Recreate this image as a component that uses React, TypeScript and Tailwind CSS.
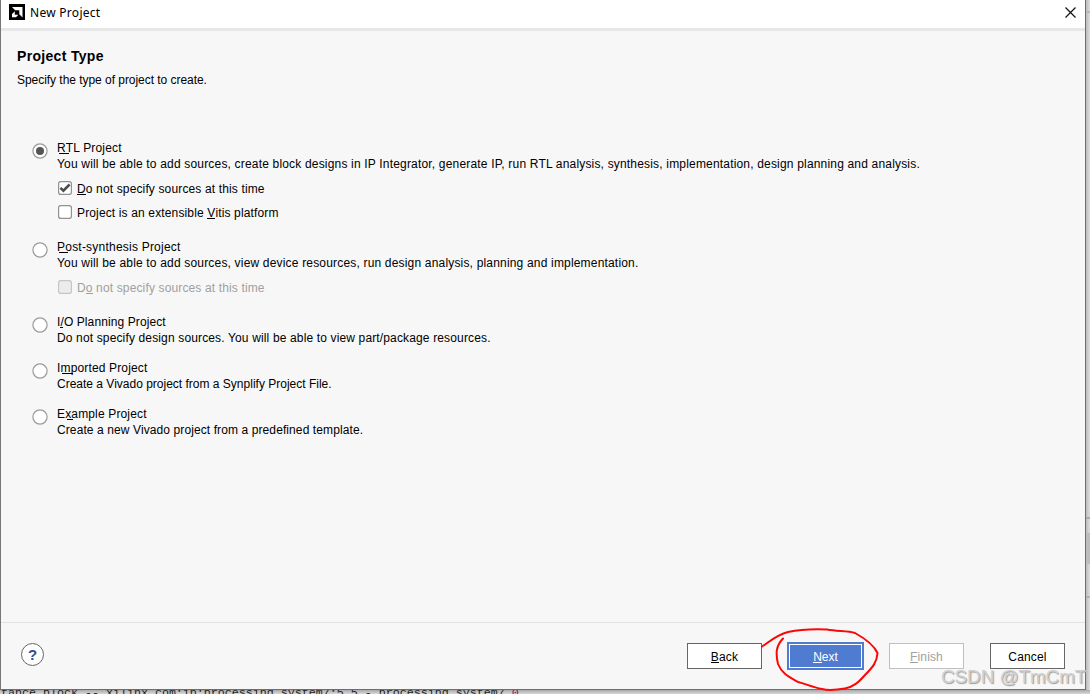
import type { ReactNode } from "react";
import clsx from "clsx";

type Option = {
  title: ReactNode;
  description: string;
  titleTracking?: string;
  tracking?: string;
  selected?: boolean;
  className?: string;
  children?: ReactNode;
};

// Underlined shortcut letter
function Mnemonic({ children, bar = "left-0 w-full" }: { children: string; bar?: string }) {
  return (
    <span className="relative">
      {children}
      <span className={clsx("absolute bottom-px h-px bg-current", bar)} />
    </span>
  );
}

function Radio({ selected }: { selected?: boolean }) {
  return (
    <svg className="mt-[3px] h-4 w-4 shrink-0" viewBox="0 0 16 16">
      <circle cx="8" cy="8" r="7.1" fill="#fff" stroke="#9a9a9a" strokeWidth="1.2" />
      {selected && <circle cx="8" cy="8" r="4" fill="#555" />}
    </svg>
  );
}

function CheckRow({
  checked,
  disabled,
  className,
  children,
}: {
  checked?: boolean;
  disabled?: boolean;
  className?: string;
  children: ReactNode;
}) {
  return (
    <div className={clsx("flex h-4 items-start", disabled ? "text-[#a0a0a0]" : "text-black", className)}>
      <svg className="ml-px mr-[5px] h-[14px] w-[14px] shrink-0" viewBox="0 0 14 14">
        <rect
          x="0.6"
          y="0.6"
          width="12.8"
          height="12.8"
          rx="2.2"
          fill={disabled ? "#ececec" : "#fff"}
          stroke={disabled ? "#c6c6c6" : "#929292"}
          strokeWidth="1.2"
        />
        {checked && <path d="M2.4 6.8 5.4 9.7 11.6 3.5" fill="none" stroke="#4c4c4c" strokeWidth="2.5" />}
      </svg>
      <span className="whitespace-nowrap tracking-[0.14px]">{children}</span>
    </div>
  );
}

function ProjectOption({ title, description, titleTracking, tracking, selected, className, children }: Option) {
  return (
    <div className={clsx("flex items-start gap-[9px]", className)}>
      <Radio selected={selected} />
      <div>
        <div className={clsx("h-4 whitespace-nowrap", titleTracking)}>{title}</div>
        <div className={clsx("h-4 whitespace-nowrap", tracking)}>{description}</div>
        {children}
      </div>
    </div>
  );
}

function DialogButton({ disabled, className, children }: { disabled?: boolean; className?: string; children: ReactNode }) {
  return (
    <button
      className={clsx(
        "flex h-[26px] w-[75px] items-center justify-center border bg-white pt-px tracking-[0.15px]",
        disabled ? "border-[#bfbfbf] text-[#a0a0a0]" : "border-[#666] text-black",
        className
      )}
    >
      <span>{children}</span>
    </button>
  );
}

export default function App() {
  return (
    <div className="relative h-[694px] w-[1090px] overflow-hidden bg-[#c9c9c9] font-['Liberation_Sans',Arial,sans-serif] text-[12px] leading-4 text-black">
      <div className="flex">
        <div className="h-[690px] w-px bg-[#777]" />
        {/* Dialog */}
        <div className="flex h-[690px] w-[1085px] flex-col border-r border-b border-[#6e6e6e] bg-[#f7f7f7]">
          <header className="flex h-[31px] shrink-0 items-start justify-between border-b-[3px] border-[#e7e7e7] bg-white">
            <div className="flex items-start pl-2 pt-1">
              <svg className="h-4 w-4" viewBox="0 0 16 16">
                <rect width="16" height="16" fill="#000" />
                <path d="M3 3h10.5v10.5L10.3 10.3V6.2H6.2z" fill="#fff" />
                <path d="M5.8 7.2v3.5h3.5L7 13.2H3V10z" fill="#fff" />
              </svg>
              <span className="ml-[5px] pt-px font-['Noto_Sans','Open_Sans',sans-serif] tracking-[0.28px]">New Project</span>
            </div>
            <svg className="mr-[9px] mt-[7px] h-[11px] w-[11px]" viewBox="0 0 11 11">
              <path d="M.5.5l10 10M10.5.5l-10 10" stroke="#111" strokeWidth="1.2" />
            </svg>
          </header>

          <div className="px-4 pt-4">
            <h1 className="h-[18px] text-[14px] font-bold leading-[18px] tracking-[0.32px]">Project Type</h1>
            <p className="mt-[7px] tracking-[-0.04px]">Specify the type of project to create.</p>
          </div>

          <main className="flex-1 pl-[31px] pt-[52px]">
            <ProjectOption
              selected
              titleTracking="tracking-[0.16px]"
              tracking="tracking-[0.18px]"
              title={<><Mnemonic bar="left-[2px] w-[10px]">R</Mnemonic>TL Project</>}
              description="You will be able to add sources, create block designs in IP Integrator, generate IP, run RTL analysis, synthesis, implementation, design planning and analysis."
            >
              <CheckRow checked className="mt-[9px]"><Mnemonic>D</Mnemonic>o not specify sources at this time</CheckRow>
              <CheckRow className="mt-2">Project is an extensible <Mnemonic>V</Mnemonic>itis platform</CheckRow>
            </ProjectOption>
            <ProjectOption
              className="mt-[18px]"
              titleTracking="tracking-[0.22px]"
              tracking="tracking-[0.18px]"
              title={<><Mnemonic bar="left-[2px] w-[9px]">P</Mnemonic>ost-synthesis Project</>}
              description="You will be able to add sources, view device resources, run design analysis, planning and implementation."
            >
              <CheckRow disabled className="mt-[9px]">D<Mnemonic>o</Mnemonic> not specify sources at this time</CheckRow>
            </ProjectOption>
            <ProjectOption
              className="mt-[18px]"
              titleTracking="tracking-[0.1px]"
              tracking="tracking-[0.144px]"
              title={<>I<Mnemonic bar="left-0 w-[3px]">/</Mnemonic>O Planning Project</>}
              description="Do not specify design sources. You will be able to view part/package resources."
            />
            <ProjectOption
              className="mt-[14px]"
              titleTracking="tracking-[0.15px]"
              title={<>I<Mnemonic bar="left-[2px] w-[11px]">m</Mnemonic>ported Project</>}
              description="Create a Vivado project from a Synplify Project File."
            />
            <ProjectOption
              className="mt-[14px]"
              titleTracking="tracking-[0.15px]"
              tracking="tracking-[0.1px]"
              title={<>E<Mnemonic bar="left-[2px] w-[6px]">x</Mnemonic>ample Project</>}
              description="Create a new Vivado project from a predefined template."
            />
          </main>

          <footer className="flex h-[67px] shrink-0 items-start justify-between border-t border-[#e2e2e2] pl-5 pr-5">
            <div className="mt-5 flex h-[23px] w-[23px] items-center justify-center rounded-full border border-[#666] bg-white text-[15px] font-bold text-[#2f4f8f]">
              ?
            </div>
            <div className="flex items-start pt-5">
              <DialogButton><Mnemonic>B</Mnemonic>ack</DialogButton>
              <button className="-mt-px ml-[25px] flex h-7 w-[77px] border-2 border-[#4f7bd0] bg-[#4f7bd0] text-white">
                <span className="flex h-6 w-[73px] items-center justify-center border border-white pt-px">
                  <span><Mnemonic>N</Mnemonic>ext</span>
                </span>
              </button>
              <DialogButton disabled className="ml-[25px]"><Mnemonic>F</Mnemonic>inish</DialogButton>
              <DialogButton className="ml-[26px]">Cancel</DialogButton>
            </div>
          </footer>
        </div>
        {/* Window behind the dialog */}
        <div className="flex h-[690px] w-1 flex-col bg-gradient-to-r from-[#bcbcbc] to-[#dedede]">
          <div className="mt-[11px] h-0.5 bg-[#b9b9b9]" />
          <div className="mt-[504px] h-0.5 bg-[#aaa]" />
          <div className="mt-[14px] h-[31px] bg-[#bdbdbd]" />
          <div className="mt-8 h-0.5 bg-[#b2b2b2]" />
        </div>
      </div>
      <div className="h-1 overflow-hidden bg-gradient-to-b from-[#aaa] to-[#d8d8d8]">
        <div className="-mt-[5px] ml-px whitespace-pre font-['Liberation_Mono',monospace] text-[11.67px] leading-4 text-[#222]">
          tance block -- xilinx.com:ip:processing_system7:5.5 - processing_system7_<span className="text-[#7a2060]">0</span>
        </div>
      </div>

      {/* Hand-drawn highlight */}
      <svg className="absolute left-[755px] top-[620px] h-[74px] w-[130px]" viewBox="755 620 130 74">
        <path
          d="M762 646.5C768 643 776 635 788 632C800 629.5 815 629 827 629.5C838 631.5 848 630.5 855 633C864 638 874 645 877.5 653C877 662 873 667 865 675C858 683 853 687 845 688.5C836 690 828 690.5 822 689C812 687 806 684 798 682C789 677 782 674 778 664C775.5 653 776 646 783 638.5"
          fill="none"
          stroke="#fa0808"
          strokeWidth="2"
          strokeLinecap="round"
        />
      </svg>

      <div className="absolute left-[941px] top-[665px] w-[145px] overflow-hidden whitespace-nowrap text-[18.8px] leading-6 text-[#d0d0d0] [text-shadow:1px_1px_1px_#9a9a9a]">
        CSDN @TmCmT
      </div>
    </div>
  );
}
